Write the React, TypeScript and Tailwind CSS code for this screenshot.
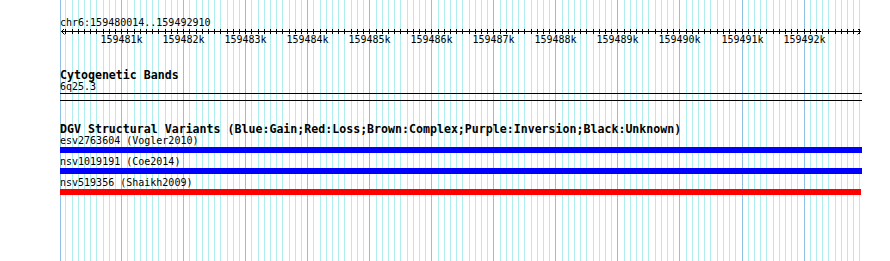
const START = 159480014;
const END = 159492910;
const LEFT = 60;
const SPAN = 800;

const toX = (bp: number) => Math.round(LEFT + ((bp - START) / (END - START)) * SPAN) + 0.5;

const minorTicks: number[] = [];
for (let bp = 159480100; bp < END; bp += 100) minorTicks.push(bp);
const majorTicks = minorTicks.filter((bp) => bp % 1000 === 0);

const variants = [
    { label: 'esv2763604 (Vogler2010)', color: 'bg-[#0000ff]', width: 'w-[802px]' },
    { label: 'nsv1019191 (Coe2014)', color: 'bg-[#0000ff]', width: 'w-[802px]' },
    { label: 'nsv519356 (Shaikh2009)', color: 'bg-[#ff0000]', width: 'w-[801px]' },
];

const mono = "font-['DejaVu_Sans_Mono','Liberation_Mono',monospace]";

function Grid() {
    return (
        <svg className="absolute left-0 top-0" width={890} height={261}>
            <line x1={LEFT + 0.5} x2={LEFT + 0.5} y1={0} y2={261} stroke="#8fc1e6" strokeWidth={1} />
            {minorTicks.map((bp) => (
                <line
                    key={bp}
                    x1={toX(bp)}
                    x2={toX(bp)}
                    y1={0}
                    y2={261}
                    stroke={bp % 1000 === 0 ? '#8fc1e6' : '#afeeee'}
                    strokeWidth={1}
                />
            ))}
        </svg>
    );
}

function Axis() {
    return (
        <svg width={890} height={16} className="block -ml-[60px]">
            <line x1={61} x2={861} y1={2.5} y2={2.5} stroke="#000" strokeWidth={1} />
            <polyline points="64.5,-0.5 61.5,2.5 64.5,5.5" fill="none" stroke="#000" strokeWidth={1} />
            <polyline points="857.5,-0.5 860.5,2.5 857.5,5.5" fill="none" stroke="#000" strokeWidth={1} />
            {minorTicks.map((bp) => (
                <line key={bp} x1={toX(bp)} x2={toX(bp)} y1={0} y2={5} stroke="#000" strokeWidth={1} />
            ))}
            {majorTicks.map((bp) => (
                <text
                    key={bp}
                    x={toX(bp)}
                    y={14}
                    textAnchor="middle"
                    fontFamily="'DejaVu Sans Mono', 'Liberation Mono', monospace"
                    fontSize={10}
                    fill="#000"
                >
                    {bp / 1000}k
                </text>
            ))}
        </svg>
    );
}

export default function App() {
    return (
        <div className="relative w-[890px] h-[261px] bg-white overflow-hidden">
            <Grid />
            <div className={`relative pl-[60px] text-black ${mono}`}>
                <div className="pt-[17px] h-[29px] text-[10px] leading-[12px]">chr6:159480014..159492910</div>
                <Axis />

                <div className="mt-[25px] h-[11px] text-[11.6px] leading-[11px] font-bold">Cytogenetic Bands</div>
                <div className="h-[12px] text-[10px] leading-[12px]">6q25.3</div>
                <div className="w-[802px] h-[8px] border-y border-black" />

                <div className="mt-[23px] h-[11px] text-[11.6px] leading-[11px] font-bold whitespace-nowrap">
                    DGV Structural Variants (Blue:Gain;Red:Loss;Brown:Complex;Purple:Inversion;Black:Unknown)
                </div>
                {variants.map((v, i) => (
                    <div key={v.label} className={i === 0 ? '' : 'mt-[3px]'}>
                        <div className="h-[12px] text-[10px] leading-[12px]">{v.label}</div>
                        <div className={`h-[6px] ${v.width} ${v.color}`} />
                    </div>
                ))}
            </div>
        </div>
    );
}
